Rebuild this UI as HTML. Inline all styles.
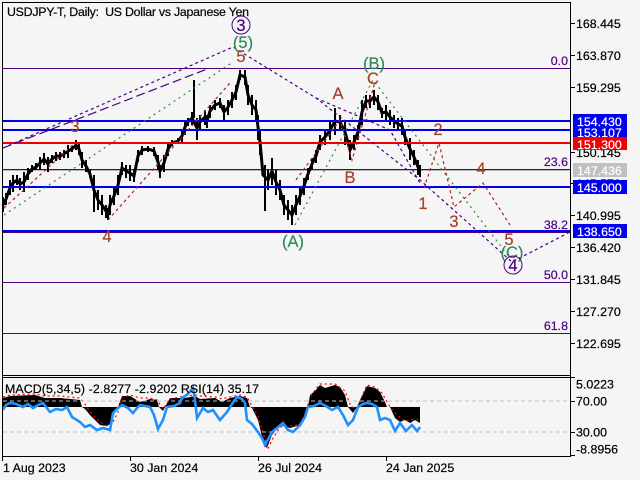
<!DOCTYPE html>
<html><head><meta charset="utf-8"><style>
html,body{margin:0;padding:0;background:#f5f5f5}
body{width:640px;height:480px;overflow:hidden;position:relative}
svg{position:absolute;left:0;top:0}
text{font-family:"Liberation Sans",sans-serif;white-space:pre}
.ax{font-size:12.4px;fill:#000;stroke:#000;stroke-width:.2}
.fib{font-size:12.4px;fill:#4b0082;stroke:#4b0082;stroke-width:.2;text-anchor:end}
.w{font-size:16.5px;text-anchor:middle}
.r{fill:#a5402a;stroke:#a5402a;stroke-width:.2}
.g{fill:#2e8b57;stroke:#2e8b57;stroke-width:.2}
.p{fill:#4b0082;stroke:#4b0082;stroke-width:.2}
.lb{font-size:12.4px;fill:#fff;stroke:#fff;stroke-width:.2}
</style></head><body>
<svg width="640" height="480" viewBox="0 0 640 480" shape-rendering="crispEdges">
<rect width="640" height="480" fill="#f5f5f5"/>
<!-- horizontal fib lines -->
<g fill="#4b0082">
<rect x="3" y="68" width="567" height="1"/>
<rect x="3" y="169" width="567" height="1"/>
<rect x="3" y="232" width="567" height="1"/>
<rect x="3" y="282" width="567" height="1"/>
<rect x="3" y="333" width="567" height="1"/>
</g>
<rect x="3" y="170" width="567" height="1" fill="#b9b9b9"/>
<!-- price -->
<path fill="none" stroke="#000" stroke-width="2.4" d="M3 197V212M6 193V205M10 180V195M13 175V192M17 175V185M20 178V190M24 172V192M28 168V180M32 165V172M36 163V170M40 157V170M44 153V165M48 157V172M52 155V163M56 152V161M60 152V160M64 150V158M68 145V158M72 146V152M76 140V150M79 143V155M82 152V168M86 160V172M90 170V178M94 175V212M98 190V210M102 195V215M106 205V218M108 208V220M110 195V215M114 188V205M118 175V195M122 162V175M126 165V178M130 165V181M134 170V182M138 150V162M142 146V155M148 146V152M154 147V156M158 155V170M160 165V178M164 155V172M168 142V156M172 140V146M178 138V144M182 130V142M185 120V135M188 118V126M192 112V125M197 118V140M200 115V130M205 110V125M207 115V128M210 105V118M215 100V110M220 98V108M224 105V120M228 100V115M232 92V108M236 85V100M240 70V80M245 70V85M248 85V105M252 95V115M256 100V120M258 115V140M260 130V155M268 170V190M272 158V185M276 170V195M280 180V200M284 195V215M288 200V220M292 205V225M296 195V215M300 188V205M304 178V195M308 168V180M312 158V170M316 150V163M320 135V150M325 130V145M330 120V140M335 108V135M340 115V130M345 120V145M350 140V160M354 135V150M358 125V140M362 100V125M366 95V108M370 95V108M374 90V105M378 95V110M382 108V118M386 105V120M390 110V125M394 115V128M398 118V130M402 118V135M405 130V145M410 138V160M414 150V165M418 160V175M420 165V177"/>
<rect x="193" y="80" width="2" height="38" fill="#000"/>
<rect x="264" y="165" width="2" height="46" fill="#000"/>
<polyline fill="none" stroke="#000" stroke-width="3" shape-rendering="auto" points="3,205 6,199 10,188 13,183 17,180 20,184 24,182 28,174 32,169 36,167 40,163 44,159 48,164 52,159 56,156 60,156 64,154 68,151 72,149 76,145 79,149 82,160 86,166 90,174 94,190 98,200 102,205 106,211 108,214 110,205 114,196 118,185 122,168 126,171 130,173 134,176 138,156 142,150 148,149 154,151 158,162 160,171 164,163 168,149 172,143 178,141 182,136 185,127 188,122 192,118 197,128 200,122 205,117 207,121 210,111 215,105 220,103 224,112 228,107 232,100 236,92 240,75 245,77 248,95 252,105 256,110 258,127 260,142 263,175 268,180 272,171 276,182 280,190 284,205 288,210 292,215 296,205 300,196 304,186 308,174 312,164 316,156 320,142 325,137 330,130 335,121 340,122 345,132 350,150 354,142 358,132 362,112 366,101 370,101 374,97 378,102 382,113 386,112 390,117 394,121 398,124 402,126 405,137 410,149 414,157 418,167 420,171"/>
<!-- horizontal levels -->
<g>
<rect x="3" y="120" width="567" height="2" fill="#0000f0"/>
<rect x="3" y="129" width="567" height="2" fill="#0000f0"/>
<rect x="3" y="142" width="567" height="2" fill="#f00000"/>
<rect x="3" y="186" width="567" height="2" fill="#0000f0"/>
<rect x="3" y="230" width="567" height="2" fill="#0000f0"/>
</g>
<!-- wave lines -->
<g fill="none" stroke-width="1.2" shape-rendering="auto">
<g stroke="#4b0082" stroke-dasharray="3 3">
<polyline points="3,148 233,47 316,98 420,180 512,262 570,232"/>
<polyline points="316,98 390,130 420,183"/>
</g>
<polyline stroke="#4b0082" stroke-dasharray="9 4" points="3,148 207,69"/>
<g stroke="#2e8b2e" stroke-dasharray="2 4">
<polyline points="4,215 233,62"/>
<polyline points="295,225 373,80 510,258"/>
</g>
<g stroke="#a52a2a" stroke-dasharray="3 3">
<polyline points="4,208 75,143"/>
<polyline points="108,220 230,83"/>
<polyline points="296,180 340,120 352,160 375,82"/>
<polyline points="424,188 439,143 454,207 483,183 510,225"/>
</g>
</g>
<!-- wave labels -->
<g class="w" shape-rendering="auto">
<circle cx="241" cy="25" r="9" fill="none" stroke="#4b0082"/>
<text x="241" y="31" class="p">3</text>
<text x="243" y="48" class="g">(5)</text>
<text x="241" y="62" class="r">5</text>
<text x="75" y="132" class="r">3</text>
<text x="107" y="242" class="r">4</text>
<text x="293" y="247" class="g">(A)</text>
<text x="338" y="99" class="r">A</text>
<text x="374" y="69" class="g">(B)</text>
<text x="373" y="84" class="r">C</text>
<text x="350" y="183" class="r">B</text>
<text x="423" y="209" class="r">1</text>
<text x="438" y="135" class="r">2</text>
<text x="454" y="227" class="r">3</text>
<text x="481" y="174" class="r">4</text>
<text x="509" y="245" class="r">5</text>
<text x="512" y="258" class="g">(C)</text>
<circle cx="513" cy="265" r="9" fill="none" stroke="#4b0082"/>
<text x="513" y="271" class="p">4</text>
</g>
<g class="fib" shape-rendering="auto">
<text x="568" y="65">0.0</text>
<text x="568" y="166">23.6</text>
<text x="568" y="229">38.2</text>
<text x="568" y="279">50.0</text>
<text x="568" y="330">61.8</text>
</g>
<text x="7" y="16" class="ax" textLength="242" lengthAdjust="spacing" shape-rendering="auto">USDJPY-T, Daily:  US Dollar vs Japanese Yen</text>
<!-- MACD histogram -->
<polygon fill="#000" points="3,407 3,398 10,396 35,395 45,398 60,398 80,400 82,407 85,409 90,415 100,425 107,426 110,424 115,412 118,407 122,396 130,396 140,402 150,399 157,400 159,407 163,411 165,407 170,398 185,398 195,396 200,399 215,398 222,402 230,398 240,396 247,398 250,407 252,408 258,420 264,445 267,448 272,435 280,425 290,428 300,425 305,415 308,407 310,395 315,391 320,385 325,388 335,385 340,387 345,395 348,407 353,413 357,407 360,400 365,390 367,386 375,388 380,392 385,402 387,407 390,407 395,418 400,422 405,420 410,423 415,420 420,423 420,407" shape-rendering="auto"/>
<polyline fill="none" stroke="#f00" stroke-width="1.2" stroke-dasharray="2 3" shape-rendering="auto" points="3,397 10,395 35,394 45,396 60,396 80,398 85,404 90,412 100,422 107,426 112,424 118,412 122,398 130,395 140,398 150,398 157,400 163,409 170,399 185,396 195,395 200,396 215,397 222,399 230,397 240,395 247,397 252,406 258,416 264,436 268,449 272,440 280,427 290,426 300,424 305,414 310,398 315,390 320,384 335,384 345,391 350,404 357,411 362,396 367,385 375,387 382,393 390,407 397,415 405,421 415,419 420,420"/>
<!-- RSI levels -->
<line x1="3" y1="401" x2="570" y2="401" stroke="#c0c0c0" stroke-dasharray="4 3"/>
<line x1="3" y1="432" x2="570" y2="432" stroke="#c0c0c0" stroke-dasharray="4 3"/>
<polyline fill="none" stroke="#1e90ff" stroke-width="2.6" shape-rendering="auto" points="3,410 6,405 10,403 16,404 23,407 28,404 33,408 38,405 43,403 50,412 56,409 62,410 67,407 72,417 80,422 85,427 90,425 97,430 103,428 110,430 113,413 118,408 122,405 128,408 133,413 137,408 140,405 150,407 154,415 158,429 163,420 167,407 174,406 180,403 182,398 188,394 193,388 195,400 197,418 203,408 208,412 213,410 220,420 227,412 232,404 237,397 242,399 245,403 247,420 252,424 258,432 262,438 265,445 272,432 277,428 283,423 288,430 293,432 300,425 305,417 308,407 314,406 320,403 326,406 332,410 338,407 343,415 348,425 353,420 358,407 363,404 367,403 372,404 377,407 380,420 385,418 390,420 395,431 400,423 406,431 412,425 417,431 420,427"/>
<!-- frame -->
<g fill="#000">
<rect x="2" y="2" width="568" height="1"/>
<rect x="2" y="2" width="1" height="454"/>
<rect x="570" y="2" width="1" height="454"/>
<rect x="2" y="375" width="568" height="1"/>
<rect x="2" y="377" width="568" height="1"/>
<rect x="2" y="456" width="569" height="1"/>
<!-- right ticks -->
<rect x="570" y="23" width="5" height="1"/>
<rect x="570" y="55" width="5" height="1"/>
<rect x="570" y="87" width="5" height="1"/>
<rect x="570" y="152" width="5" height="1"/>
<rect x="570" y="183" width="5" height="1"/>
<rect x="570" y="215" width="5" height="1"/>
<rect x="570" y="247" width="5" height="1"/>
<rect x="570" y="279" width="5" height="1"/>
<rect x="570" y="311" width="5" height="1"/>
<rect x="570" y="343" width="5" height="1"/>
<rect x="570" y="377" width="5" height="1"/>
<rect x="570" y="401" width="5" height="1"/>
<rect x="570" y="432" width="5" height="1"/>
<rect x="570" y="455" width="5" height="1"/>
<!-- bottom ticks -->
<rect x="2" y="456" width="1" height="5"/>
<rect x="130" y="456" width="1" height="5"/>
<rect x="258" y="456" width="1" height="5"/>
<rect x="386" y="456" width="1" height="5"/>
</g>
<g class="ax" shape-rendering="auto">
<text x="576" y="28">168.445</text>
<text x="576" y="60">163.870</text>
<text x="576" y="92">159.295</text>
<text x="576" y="157">150.145</text>
<text x="576" y="188">145.570</text>
<text x="576" y="220">140.995</text>
<text x="576" y="252">136.420</text>
<text x="576" y="284">131.845</text>
<text x="576" y="316">127.270</text>
<text x="576" y="348">122.695</text>
<text x="576" y="388.5">5.0223</text>
<text x="576" y="405.5">70.00</text>
<text x="576" y="436.5">30.00</text>
<text x="576" y="453.5">-8.8956</text>
<text x="5" y="393" textLength="254" lengthAdjust="spacing">MACD(5,34,5) -2.8277 -2.9202 RSI(14) 35.17</text>
<text x="3" y="472">1 Aug 2023</text>
<text x="130" y="472">30 Jan 2024</text>
<text x="258" y="472">26 Jul 2024</text>
<text x="386" y="472">24 Jan 2025</text>
</g>
<!-- price labels -->
<rect x="573" y="124" width="54" height="13" fill="#0000f0"/>
<text x="577" y="137" class="lb" shape-rendering="auto">153.107</text>
<rect x="573" y="114" width="54" height="13" fill="#0000f0"/>
<text x="577" y="126" class="lb" shape-rendering="auto">154.430</text>
<rect x="573" y="137" width="54" height="13" fill="#f00000"/>
<text x="577" y="149" class="lb" shape-rendering="auto">151.300</text>
<rect x="573" y="163" width="54" height="14" fill="#c0c0c0"/>
<text x="577" y="175" class="lb" shape-rendering="auto">147.436</text>
<rect x="573" y="180" width="54" height="14" fill="#0000f0"/>
<text x="577" y="192" class="lb" shape-rendering="auto">145.000</text>
<rect x="573" y="224" width="54" height="14" fill="#0000f0"/>
<text x="577" y="236" class="lb" shape-rendering="auto">138.650</text>
</svg>
</body></html>
